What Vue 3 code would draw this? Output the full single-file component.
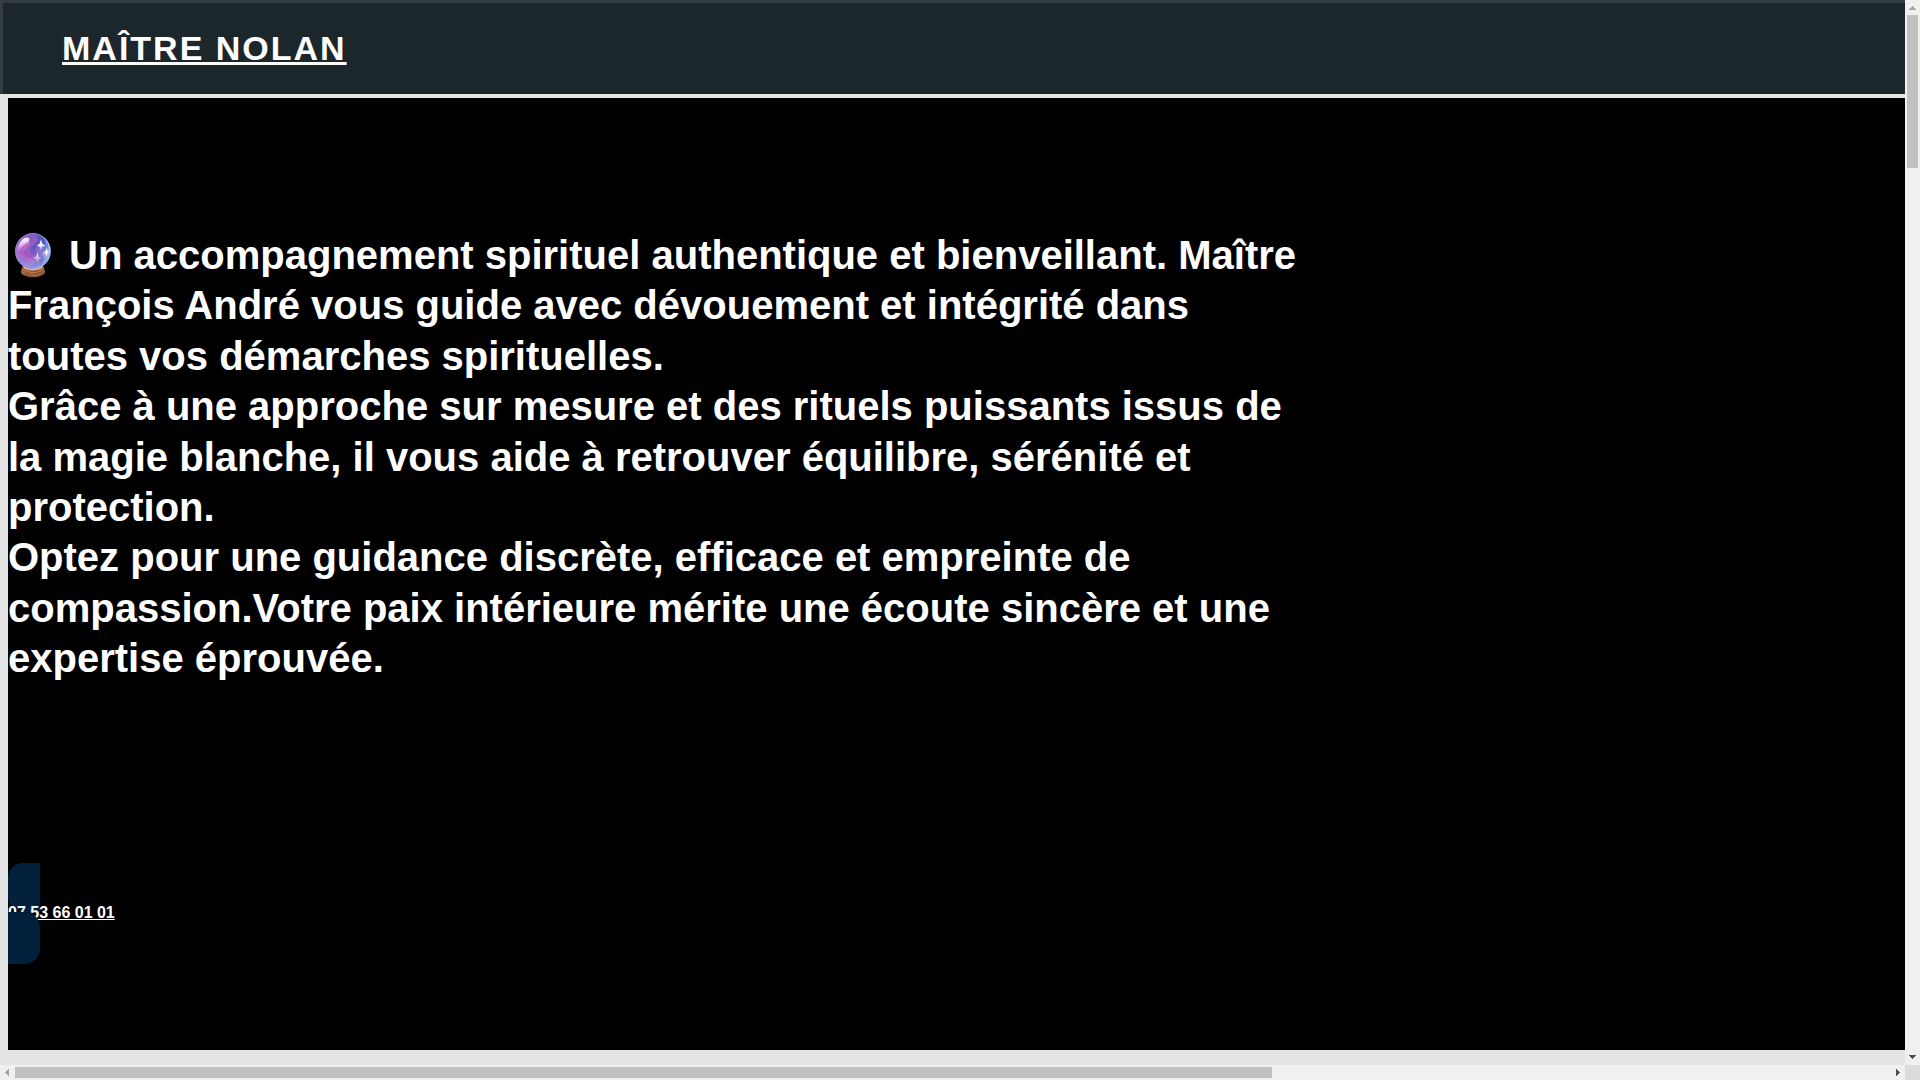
<script setup>
const paragraphs = [
  '🔮 Un accompagnement spirituel authentique et bienveillant. Maître François André vous guide avec dévouement et intégrité dans toutes vos démarches spirituelles.',
  'Grâce à une approche sur mesure et des rituels puissants issus de la magie blanche, il vous aide à retrouver équilibre, sérénité et protection.',
  'Optez pour une guidance discrète, efficace et empreinte de compassion.Votre paix intérieure mérite une écoute sincère et une expertise éprouvée.',
]
</script>

<template>
  <div class="viewport">
    <div class="page">
      <header class="topbar">
        <a class="brand" href="#">MAÎTRE NOLAN</a>
      </header>
      <main class="hero">
        <h1 class="intro">
          <span v-for="(text, i) in paragraphs" :key="i">{{ text }}</span>
        </h1>
        <div class="contact">
          <span class="tab tab-left"></span>
          <a class="phone" href="tel:0753660101">07 53 66 01 01</a>
          <span class="tab tab-right"></span>
        </div>
      </main>
    </div>
    <div class="bar bar-y" aria-hidden="true">
      <svg width="15" height="15"><path d="M7 6h1v1h1v1h1v1h1v1H4V9h1V8h1V7h1z" fill="#a3a3a3" /></svg>
      <div class="track"><div class="thumb"></div></div>
      <svg width="15" height="15"><path d="M4 5h7v1h-1v1H9v1H8v1H7V8H6V7H5V6H4z" fill="#505050" /></svg>
    </div>
    <div class="bar bar-x" aria-hidden="true">
      <svg width="15" height="15"><path d="M9 4v7H8v-1H7V9H6V8H5V7h1V6h1V5h1V4z" fill="#a3a3a3" /></svg>
      <div class="track"><div class="thumb"></div></div>
      <svg width="15" height="15"><path d="M6 4h1v1h1v1h1v1h1v1H9v1H8v1H7v1H6z" fill="#505050" /></svg>
    </div>
    <div class="corner"></div>
  </div>
</template>

<style>
body {
  margin: 0;
  background: #e4e4e4;
}
</style>

<style scoped>
.viewport {
  display: grid;
  grid-template-columns: minmax(0, 1fr) 15px;
  grid-template-rows: minmax(0, 1fr) 15px;
  height: 100vh;
  font-family: "Liberation Sans", Arial, sans-serif;
  font-weight: 700;
  color: #fff;
}
.page {
  display: flex;
  flex-direction: column;
  overflow: hidden;
  background: #e4e4e4;
}
.topbar {
  box-sizing: border-box;
  height: 94px;
  flex: none;
  display: flex;
  align-items: center;
  padding-left: 59px;
  border: solid #333d42;
  border-width: 3px 0 0 3px;
  background: #1c272c;
}
.brand {
  color: inherit;
  font-size: 34px;
  letter-spacing: 2px;
}
.hero {
  flex: 1;
  margin: 4px 0 15px 8px;
  padding-top: 132px;
  box-sizing: border-box;
  background: #000;
}
.intro {
  margin: 0;
  max-width: 1312px;
  font-size: 40px;
  line-height: 1.26;
}
.intro span {
  display: block;
}
.contact {
  position: relative;
  display: flex;
  align-items: center;
  height: 101px;
  margin-top: 179px;
  font-size: 16px;
}
.phone {
  position: relative;
  color: inherit;
}
.tab {
  position: absolute;
  left: 0;
  width: 32px;
  background: #00203c;
}
.tab-left {
  top: 0;
  height: 49px;
  border-radius: 15px 0 0 15px;
}
.tab-right {
  bottom: 0;
  height: 52px;
  border-radius: 0 15px 15px 0;
  z-index: 1;
}
.bar {
  display: flex;
  background: #f0f0f0;
}
.bar svg {
  flex: none;
  display: block;
}
.bar-y {
  flex-direction: column;
}
.track {
  flex: 1;
}
.thumb {
  background: #c1c1c1;
}
.bar-y .thumb {
  width: 11px;
  height: 14.8%;
  margin: 0 2px;
}
.bar-x .thumb {
  width: 67.05%;
  height: 11px;
  margin: 2px 0;
}
.corner {
  background: #dcdcdc;
}
</style>
